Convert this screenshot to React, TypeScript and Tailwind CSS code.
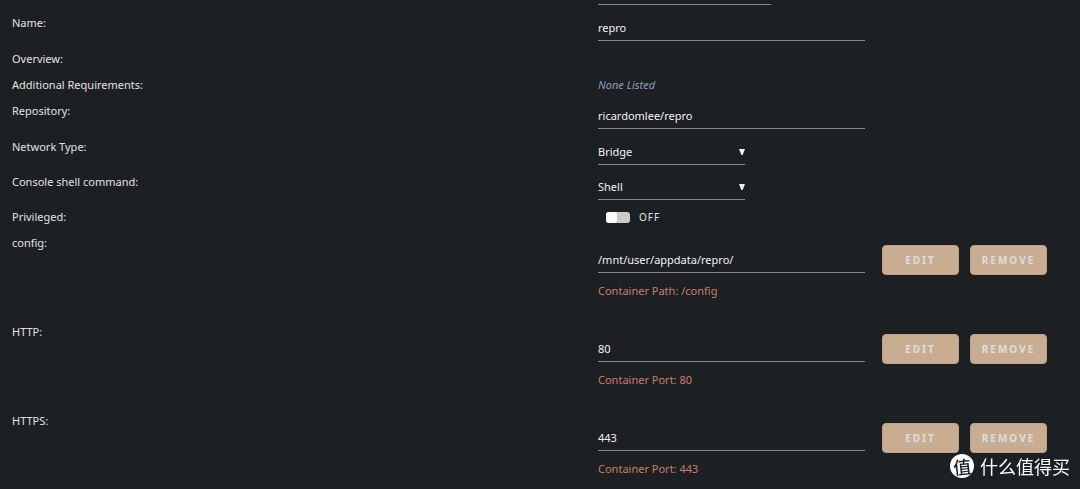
import { useState } from "react";
import type { ReactNode } from "react";

interface ConfigEntry {
  id: string;
  label: string;
  value: string;
  hint: string;
}

const CONFIG_ENTRIES: ConfigEntry[] = [
  { id: "config", label: "config:", value: "/mnt/user/appdata/repro/", hint: "Container Path: /config" },
  { id: "http", label: "HTTP:", value: "80", hint: "Container Port: 80" },
  { id: "https", label: "HTTPS:", value: "443", hint: "Container Port: 443" },
];

const FIELD =
  "block h-[26px] border-b border-[#85878a] bg-transparent text-[11px] text-[#f2f2f2] outline-none";

const BUTTON =
  "h-[30px] w-[77px] rounded-[4px] border border-[#c0a08a] bg-[#c9ad93] text-[10px] font-bold tracking-[2px] text-[#dededf]";

function Row({ label, htmlFor, children }: { label: string; htmlFor?: string; children?: ReactNode }) {
  return (
    <div className="grid grid-cols-[55%_1fr]">
      <div className="pl-3 leading-[26px]">
        {htmlFor ? <label htmlFor={htmlFor}>{label}</label> : <span>{label}</span>}
      </div>
      <div className="pl-1">{children}</div>
    </div>
  );
}

function TextRow({ id, label, value }: { id: string; label: string; value: string }) {
  return (
    <Row label={label} htmlFor={id}>
      <div className="pt-[5px] pb-[5px]">
        <input id={id} type="text" defaultValue={value} className={`${FIELD} w-[267px]`} />
      </div>
    </Row>
  );
}

function SelectRow({ id, label, options }: { id: string; label: string; options: string[] }) {
  return (
    <Row label={label} htmlFor={id}>
      <div className="pt-[5px] pb-[4px]">
        <div className="relative w-[147px]">
          <select id={id} className={`${FIELD} w-full appearance-none pt-[2px]`}>
            {options.map((option) => (
              <option key={option}>{option}</option>
            ))}
          </select>
          <svg
            className="pointer-events-none absolute top-[10px] right-0 h-[6px] w-[6px]"
            viewBox="0 0 6 6"
            aria-hidden="true"
          >
            <path d="M0 0H6L3.6 6H2.4Z" fill="#f2f2f2" />
          </svg>
        </div>
      </div>
    </Row>
  );
}

function ConfigRow({ id, label, value, hint }: ConfigEntry) {
  return (
    <Row label={label} htmlFor={id}>
      <div className="flex items-start pt-[15px]">
        <input id={id} type="text" defaultValue={value} className={`${FIELD} mt-[2px] w-[267px]`} />
        <button type="button" className={`${BUTTON} ml-[17px]`}>
          EDIT
        </button>
        <button type="button" className={`${BUTTON} ml-[11px]`}>
          REMOVE
        </button>
      </div>
      <p className="pt-[3px] pb-[15px] leading-[26px] text-[#cb7d6b]">{hint}</p>
    </Row>
  );
}

function Watermark() {
  return (
    <div className="fixed right-[10px] bottom-[11px] flex items-center gap-[6px] font-['Noto_Sans_CJK_SC',sans-serif] text-white">
      <span className="flex h-6 w-6 items-center justify-center rounded-full bg-white text-[#1c2023]">
        <span className="-rotate-6 text-[18px] leading-none font-medium">值</span>
      </span>
      <span className="text-[18px] leading-6">什么值得买</span>
    </div>
  );
}

export default function App() {
  const [privileged, setPrivileged] = useState(false);

  return (
    <div className="min-h-screen bg-[#1c2023] font-['Noto_Sans','Noto_Sans_CJK_SC',sans-serif] text-[11px] text-[#e2e2e2]">
      <form onSubmit={(e) => e.preventDefault()}>
        {/* Tail of the template picker */}
        <div className="grid grid-cols-[55%_1fr] pb-[5px]">
          <div className="col-start-2 pl-1">
            <div className="h-[5px] w-[173px] border-b border-[#85878a]" />
          </div>
        </div>

        <TextRow id="name" label="Name:" value="repro" />
        <Row label="Overview:" />
        <Row label="Additional Requirements:">
          <em className="leading-[26px] text-[#869fbd]">None Listed</em>
        </Row>
        <TextRow id="repository" label="Repository:" value="ricardomlee/repro" />
        <SelectRow id="network" label="Network Type:" options={["Bridge", "Host", "None"]} />
        <SelectRow id="shell" label="Console shell command:" options={["Shell", "Bash"]} />
        <Row label="Privileged:" htmlFor="privileged">
          <div className="flex h-[26px] items-center pl-2">
            <input
              id="privileged"
              type="checkbox"
              role="switch"
              checked={privileged}
              onChange={(e) => setPrivileged(e.target.checked)}
              className="h-[11px] w-6 appearance-none rounded-[3px] bg-[#cccaca] before:block before:h-[11px] before:w-[11px] before:rounded-[3px] before:bg-[#fafafa] checked:bg-[#c9ad93] checked:before:ml-[13px]"
            />
            <span className="ml-[9px] text-[10px] tracking-[1px]">{privileged ? "ON" : "OFF"}</span>
          </div>
        </Row>

        {CONFIG_ENTRIES.map((entry) => (
          <ConfigRow key={entry.id} {...entry} />
        ))}
      </form>
      <Watermark />
    </div>
  );
}
